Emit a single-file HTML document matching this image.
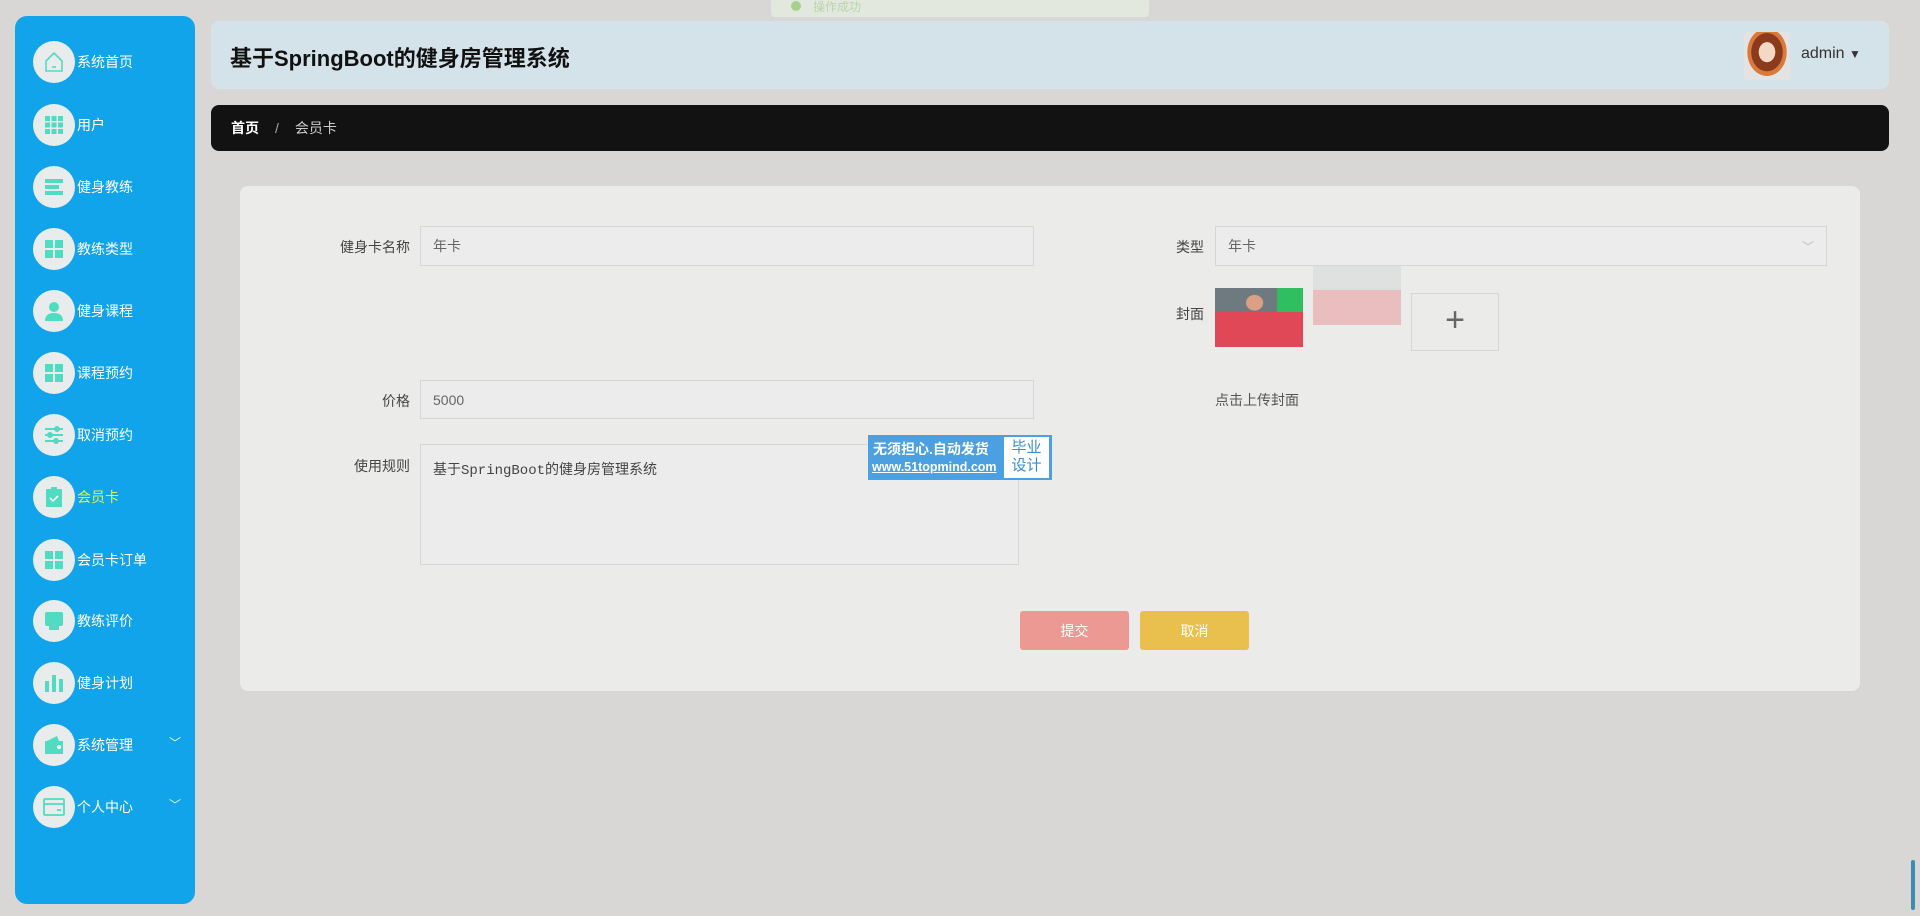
<!DOCTYPE html>
<html><head><meta charset="utf-8"><style>
*{margin:0;padding:0;box-sizing:border-box}
body{width:1920px;height:916px;background:#d9d6d6;font-family:"Liberation Sans","Noto Sans CJK SC",sans-serif;position:relative;overflow:hidden;color:#333}
.abs{position:absolute}
#side{left:15px;top:16px;width:180px;height:888px;background:#12a4ea;border-radius:12px}
.it{position:absolute;left:18px;height:42px;display:flex;align-items:center;color:#fff;font-size:14px}
.ci{width:42px;height:42px;border-radius:50%;background:#e9ecec;display:flex;align-items:center;justify-content:center;margin-right:2px}
.chev{position:absolute;color:#e8f4fb;font-size:12px}
#hdr{left:211px;top:21px;width:1678px;height:68px;background:#d4e3ea;border-radius:8px}
#bc{left:211px;top:105px;width:1678px;height:46px;background:#121212;border-radius:8px;color:#fff;font-size:14px;display:flex;align-items:center;padding-left:20px}
#card{left:240px;top:186px;width:1620px;height:505px;background:#ebebea;border-radius:8px}
.lbl{position:absolute;font-size:14px;color:#444;text-align:right}
.inp{position:absolute;border:1px solid #d6d6d6;background:#ececec;font-size:14px;color:#666;padding-left:12px;display:flex;align-items:center}
.btn{position:absolute;top:611px;width:109px;height:39px;border-radius:3px;color:#fff;font-size:14px;display:flex;align-items:center;justify-content:center}
</style></head><body>
<div class="abs" style="left:771px;top:0;width:378px;height:17px;background:#e3e8df;border-radius:0 0 4px 4px;font-size:12px;color:#b8d6a8;padding-left:20px;line-height:14px"><span style="display:inline-block;width:10px;height:10px;border-radius:50%;background:#a9d18e;margin-right:12px"></span>操作成功</div>
<div id="side" class="abs">
<div class="it" style="top:25px"><div class="ci"><svg width="24" height="24" viewBox="0 0 24 24" fill="none" stroke="#4fdcc0" stroke-width="1.6"><path d="M4 11L12 3l8 8v10H4z"/><path d="M10 17h4"/></svg></div>系统首页</div>
<div class="it" style="top:88px"><div class="ci"><svg width="22" height="22" viewBox="0 0 22 22" fill="#4fdcc0"><rect x="2" y="2" width="5" height="5"/><rect x="8.5" y="2" width="5" height="5"/><rect x="15" y="2" width="5" height="5"/><rect x="2" y="8.5" width="5" height="5"/><rect x="8.5" y="8.5" width="5" height="5"/><rect x="15" y="8.5" width="5" height="5"/><rect x="2" y="15" width="5" height="5"/><rect x="8.5" y="15" width="5" height="5"/><rect x="15" y="15" width="5" height="5"/></svg></div>用户</div>
<div class="it" style="top:150px"><div class="ci"><svg width="22" height="22" viewBox="0 0 22 22" fill="#4fdcc0"><rect x="2" y="3" width="18" height="4"/><rect x="2" y="9" width="14" height="4"/><rect x="2" y="15" width="18" height="4"/></svg></div>健身教练</div>
<div class="it" style="top:212px"><div class="ci"><svg width="22" height="22" viewBox="0 0 22 22" fill="#4fdcc0"><rect x="2" y="2" width="8" height="8"/><rect x="12" y="2" width="8" height="8"/><rect x="2" y="12" width="8" height="8"/><rect x="12" y="12" width="8" height="8"/></svg></div>教练类型</div>
<div class="it" style="top:274px"><div class="ci"><svg width="22" height="22" viewBox="0 0 22 22" fill="#4fdcc0"><circle cx="11" cy="7" r="5"/><path d="M2 21c0-6 4-8 9-8s9 2 9 8z"/></svg></div>健身课程</div>
<div class="it" style="top:336px"><div class="ci"><svg width="22" height="22" viewBox="0 0 22 22" fill="#4fdcc0"><rect x="2" y="2" width="8" height="8"/><rect x="12" y="2" width="8" height="8"/><rect x="2" y="12" width="8" height="8"/><rect x="12" y="12" width="8" height="8"/></svg></div>课程预约</div>
<div class="it" style="top:398px"><div class="ci"><svg width="22" height="22" viewBox="0 0 22 22" fill="none" stroke="#4fdcc0" stroke-width="2"><path d="M2 5h18M2 11h18M2 17h18"/><circle cx="14" cy="5" r="2" fill="#4fdcc0"/><circle cx="7" cy="11" r="2" fill="#4fdcc0"/><circle cx="13" cy="17" r="2" fill="#4fdcc0"/></svg></div>取消预约</div>
<div class="it" style="top:460px;color:#d8f74a"><div class="ci"><svg width="22" height="22" viewBox="0 0 22 22"><rect x="3" y="3" width="16" height="18" rx="1" fill="#4fdcc0"/><rect x="8" y="1" width="6" height="4" fill="#4fdcc0"/><path d="M7 12l3 3 5-5" stroke="#fff" stroke-width="1.6" fill="none"/></svg></div>会员卡</div>
<div class="it" style="top:523px"><div class="ci"><svg width="22" height="22" viewBox="0 0 22 22" fill="#4fdcc0"><rect x="2" y="2" width="8" height="8"/><rect x="12" y="2" width="8" height="8"/><rect x="2" y="12" width="8" height="8"/><rect x="12" y="12" width="8" height="8"/></svg></div>会员卡订单</div>
<div class="it" style="top:584px"><div class="ci"><svg width="22" height="22" viewBox="0 0 22 22" fill="#4fdcc0"><rect x="2" y="2" width="18" height="14" rx="2"/><rect x="6" y="16" width="10" height="4"/></svg></div>教练评价</div>
<div class="it" style="top:646px"><div class="ci"><svg width="22" height="22" viewBox="0 0 22 22" fill="#4fdcc0"><rect x="2" y="9" width="4" height="11"/><rect x="9" y="3" width="4" height="17"/><rect x="16" y="7" width="4" height="13"/></svg></div>健身计划</div>
<div class="it" style="top:708px"><div class="ci"><svg width="22" height="22" viewBox="0 0 22 22" fill="#4fdcc0"><path d="M2 7h18v13H2z"/><path d="M4 7l10-5 2 5z"/><circle cx="16" cy="13" r="2" fill="#fff"/></svg></div>系统管理<span class="chev" style="left:136px;top:10px">﹀</span></div>
<div class="it" style="top:770px"><div class="ci"><svg width="24" height="22" viewBox="0 0 24 22" fill="none" stroke="#4fdcc0" stroke-width="1.8"><rect x="2" y="3" width="20" height="16" rx="1"/><path d="M2 8h20"/><path d="M15 14h4"/></svg></div>个人中心<span class="chev" style="left:136px;top:10px">﹀</span></div>
</div>
<div id="hdr" class="abs">
<div class="abs" style="left:19px;top:20px;font-size:22px;font-weight:bold;color:#111">基于SpringBoot的健身房管理系统</div>
<div class="abs" style="left:1533px;top:11px;width:46px;height:48px;border-radius:4px;background:radial-gradient(ellipse at 50% 42%,#f3d9c4 0 25%,#8b3a1c 26% 48%,#d97a3a 49% 60%,#e3e3e3 61%)"></div>
<div class="abs" style="left:1590px;top:24px;font-size:16px;color:#333">admin <span style="font-size:12px">▼</span></div>
</div>
<div id="bc" class="abs"><b>首页</b><span style="margin:0 16px;color:#aaa">/</span><span style="color:#ccc">会员卡</span></div>
<div id="card" class="abs"></div>
<div class="lbl" style="left:320px;top:237px;width:90px">健身卡名称</div>
<div class="inp" style="left:420px;top:226px;width:614px;height:40px">年卡</div>
<div class="lbl" style="left:1150px;top:237px;width:54px">类型</div>
<div class="inp" style="left:1215px;top:226px;width:612px;height:40px">年卡<span style="position:absolute;right:12px;color:#bbb;font-size:12px">﹀</span></div>
<div class="lbl" style="left:1150px;top:304px;width:54px">封面</div>
<div class="abs" style="left:1215px;top:288px;width:88px;height:59px;background:radial-gradient(ellipse at 45% 25%,#d9a083 0 12%,transparent 13%),linear-gradient(180deg,transparent 40%,#e04858 41%),linear-gradient(90deg,#6e7a80 0 70%,#2fbf60 71%)"></div>
<div class="abs" style="left:1313px;top:266px;width:88px;height:59px;background:linear-gradient(180deg,#dcdede 0 40%,#e9b3b3 41%);opacity:.8"></div>
<div class="abs" style="left:1411px;top:293px;width:88px;height:58px;border:1px solid #d6d6d6;font-size:34px;color:#666;font-weight:200;text-align:center;line-height:52px">+</div>
<div class="abs" style="left:1215px;top:390px;font-size:14px;color:#555">点击上传封面</div>
<div class="lbl" style="left:350px;top:391px;width:60px">价格</div>
<div class="inp" style="left:420px;top:380px;width:614px;height:39px">5000</div>
<div class="lbl" style="left:330px;top:456px;width:80px">使用规则</div>
<div class="inp" style="left:420px;top:444px;width:599px;height:121px;align-items:flex-start;padding-top:14px;font-family:'Liberation Mono','Noto Sans CJK SC',monospace;font-size:14px;color:#444">基于SpringBoot的健身房管理系统</div>
<div class="abs" style="left:868px;top:435px;width:184px;height:45px;background:#4aa0e0;color:#fff;font-size:14px;font-weight:bold">
<div class="abs" style="left:5px;top:4px">无须担心.自动发货</div>
<div class="abs" style="left:4px;top:25px;font-size:12.5px;text-decoration:underline">www.51topmind.com</div>
<div class="abs" style="left:136px;top:2px;width:45px;height:41px;background:#fff;color:#3a8fd0;font-size:15px;font-weight:normal;line-height:18px;text-align:center;padding-top:2px">毕业<br>设计</div>
</div>
<div class="btn" style="left:1020px;background:#ec9893">提交</div>
<div class="btn" style="left:1140px;background:#e9c04e">取消</div>
<div class="abs" style="left:1911px;top:860px;width:4px;height:50px;background:#3a8fb0;border-radius:2px"></div>
</body></html>
